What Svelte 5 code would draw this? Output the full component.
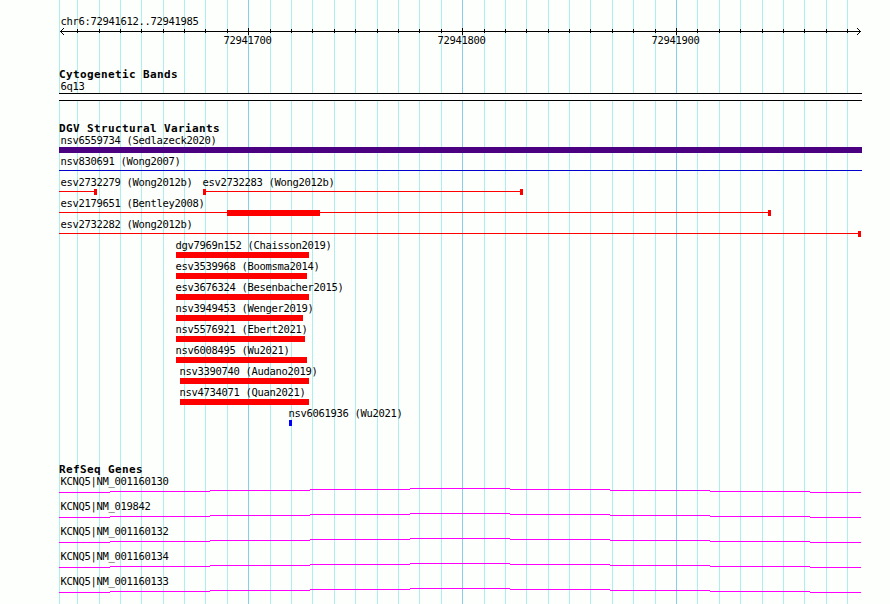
<script lang="ts">
	const WIDTH = 890;
	const HEIGHT = 604;
	const LEFT = 59;
	const RIGHT = 862;
	const START = 72941612;
	const STOP = 72941985;

	type Part = { from: number; to: number; thin?: boolean };
	type Feature = { name: string; x: number; color: string; parts: Part[] };

	// Genome coordinate -> pixel column
	function toX(pos: number): number {
		return Math.round(60 + ((pos - START) * 800) / (STOP - START + 1));
	}

	const ticks: { x: number; pos: number; major: boolean }[] = [];
	for (let pos = 72941620; pos <= STOP - 3; pos += 10) {
		ticks.push({ x: toX(pos), pos, major: pos % 100 === 0 });
	}

	function bar(name: string, from: number, to: number, color = 'red'): Feature {
		return { name, x: Math.max(from - 1, 60), color, parts: [{ from, to }] };
	}

	const rows: Feature[][] = [
		[bar('nsv6559734 (Sedlazeck2020)', LEFT, RIGHT, 'indigo')],
		[{ name: 'nsv830691 (Wong2007)', x: 60, color: 'mediumblue', parts: [{ from: LEFT, to: RIGHT, thin: true }] }],
		[
			{
				name: 'esv2732279 (Wong2012b)',
				x: 60,
				color: 'red',
				parts: [
					{ from: LEFT, to: 94, thin: true },
					{ from: 94, to: 97 }
				]
			},
			{
				name: 'esv2732283 (Wong2012b)',
				x: 202,
				color: 'red',
				parts: [
					{ from: 203, to: 206 },
					{ from: 206, to: 520, thin: true },
					{ from: 520, to: 523 }
				]
			}
		],
		[
			{
				name: 'esv2179651 (Bentley2008)',
				x: 60,
				color: 'red',
				parts: [
					{ from: LEFT, to: 768, thin: true },
					{ from: 227, to: 320 },
					{ from: 768, to: 771 }
				]
			}
		],
		[
			{
				name: 'esv2732282 (Wong2012b)',
				x: 60,
				color: 'red',
				parts: [
					{ from: LEFT, to: 858, thin: true },
					{ from: 858, to: 861 }
				]
			}
		],
		[bar('dgv7969n152 (Chaisson2019)', 176, 309)],
		[bar('esv3539968 (Boomsma2014)', 176, 307)],
		[bar('esv3676324 (Besenbacher2015)', 176, 309)],
		[bar('nsv3949453 (Wenger2019)', 176, 303)],
		[bar('nsv5576921 (Ebert2021)', 176, 305)],
		[bar('nsv6008495 (Wu2021)', 176, 307)],
		[bar('nsv3390740 (Audano2019)', 180, 309)],
		[bar('nsv4734071 (Quan2021)', 180, 309)],
		[bar('nsv6061936 (Wu2021)', 289, 292, 'blue')]
	];

	const genes = ['NM_001160130', 'NM_019842', 'NM_001160132', 'NM_001160134', 'NM_001160133'];

	// The intron line is a very flat hat, one pixel per step
	const edges = [LEFT, 110, 210, 310, 410, 510, 610, 710, 810, 861];
	const steps = edges.slice(0, -1).map((x, i) => ({ x, width: edges[i + 1] - x, y: Math.abs(i - 4) }));
</script>

<main class="browser">
	<svg class="grid" width={WIDTH} height={HEIGHT} shape-rendering="crispEdges">
		<rect class="minor" x={LEFT} y="0" width="1" height={HEIGHT} />
		{#each ticks as tick}
			<rect class={tick.major ? 'major' : 'minor'} x={tick.x} y="0" width="1" height={HEIGHT} />
		{/each}
	</svg>

	<header class="overview">
		<div class="label">chr6:{START}..{STOP}</div>
		<svg class="ruler" width={WIDTH} height="20">
			<g shape-rendering="crispEdges">
				<rect x="60" y="4" width="801" height="1" />
				{#each ticks as tick}
					<rect x={tick.x} y={tick.major ? 1 : 2} width="1" height={tick.major ? 7 : 4} />
				{/each}
				{#each [1, 2, 3] as n}
					<rect x={60 + n} y={4 - n} width="1" height="1" />
					<rect x={60 + n} y={4 + n} width="1" height="1" />
					<rect x={860 - n} y={4 - n} width="1" height="1" />
					<rect x={860 - n} y={4 + n} width="1" height="1" />
				{/each}
			</g>
			{#each ticks.filter((t) => t.major) as tick}
				<text x={tick.x - 24.5} y="17">{tick.pos}</text>
			{/each}
		</svg>
	</header>

	<section class="track bands">
		<h2>Cytogenetic Bands</h2>
		<div class="label">6q13</div>
		<div class="band"></div>
	</section>

	<section class="track variants">
		<h2>DGV Structural Variants</h2>
		{#each rows as row}
			<div class="row">
				{#each row as feature}
					<div class="feature">
						<span class="label" style="margin-left: {feature.x - 60}px">{feature.name}</span>
						<svg width={WIDTH} height="6" fill={feature.color} shape-rendering="crispEdges">
							{#each feature.parts as part}
								<rect
									x={part.from}
									y={part.thin ? 2 : 0}
									width={part.to - part.from}
									height={part.thin ? 1 : 6}
								/>
							{/each}
						</svg>
					</div>
				{/each}
			</div>
		{/each}
	</section>

	<section class="track genes">
		<h2>RefSeq Genes</h2>
		{#each genes as gene}
			<div class="gene">
				<div class="label">KCNQ5|{gene}</div>
				<svg width={WIDTH} height="5" fill="magenta" shape-rendering="crispEdges">
					{#each steps as step}
						<rect x={step.x} y={step.y} width={step.width} height="1" />
					{/each}
				</svg>
			</div>
		{/each}
	</section>
</main>

<style>
	:global(body) {
		margin: 0;
		background: #fdfffc;
	}

	.browser {
		position: relative;
		width: 890px;
		height: 604px;
		overflow: hidden;
		box-sizing: border-box;
		padding-top: 15px;
		background: #fdfffc;
		color: #000;
		font-family: 'DejaVu Sans Mono', monospace;
		font-size: 10.5px;
		letter-spacing: -0.32px;
	}

	svg {
		display: block;
	}

	/* Grid lines run behind every track */
	.grid {
		position: absolute;
		top: 0;
		left: 0;
	}

	.minor {
		fill: #afeeee;
	}

	.major {
		fill: #87ceeb;
	}

	.overview,
	.track {
		position: relative;
	}

	.overview {
		height: 54px;
	}

	.label {
		display: block;
		height: 12px;
		padding-left: 60.5px;
		line-height: 13px;
		white-space: pre;
	}

	.bands .label,
	.genes .label {
		line-height: 11px;
	}

	h2 {
		height: 12px;
		margin: 0;
		padding-left: 59px;
		font-size: 11px;
		font-weight: bold;
		line-height: 11px;
		letter-spacing: 0.38px;
	}

	.bands {
		height: 53px;
	}

	.band {
		width: 803px;
		height: 8px;
		box-sizing: border-box;
		margin-left: 59px;
		border: solid #000;
		border-width: 1px 0;
		background: #fff;
	}

	.variants {
		height: 342px;
	}

	.variants h2 {
		line-height: 13px;
	}

	.row {
		display: grid;
		height: 21px;
	}

	.feature {
		grid-area: 1 / 1;
	}

	.row .label {
		height: 13px;
	}

	.gene {
		height: 25px;
	}
</style>
